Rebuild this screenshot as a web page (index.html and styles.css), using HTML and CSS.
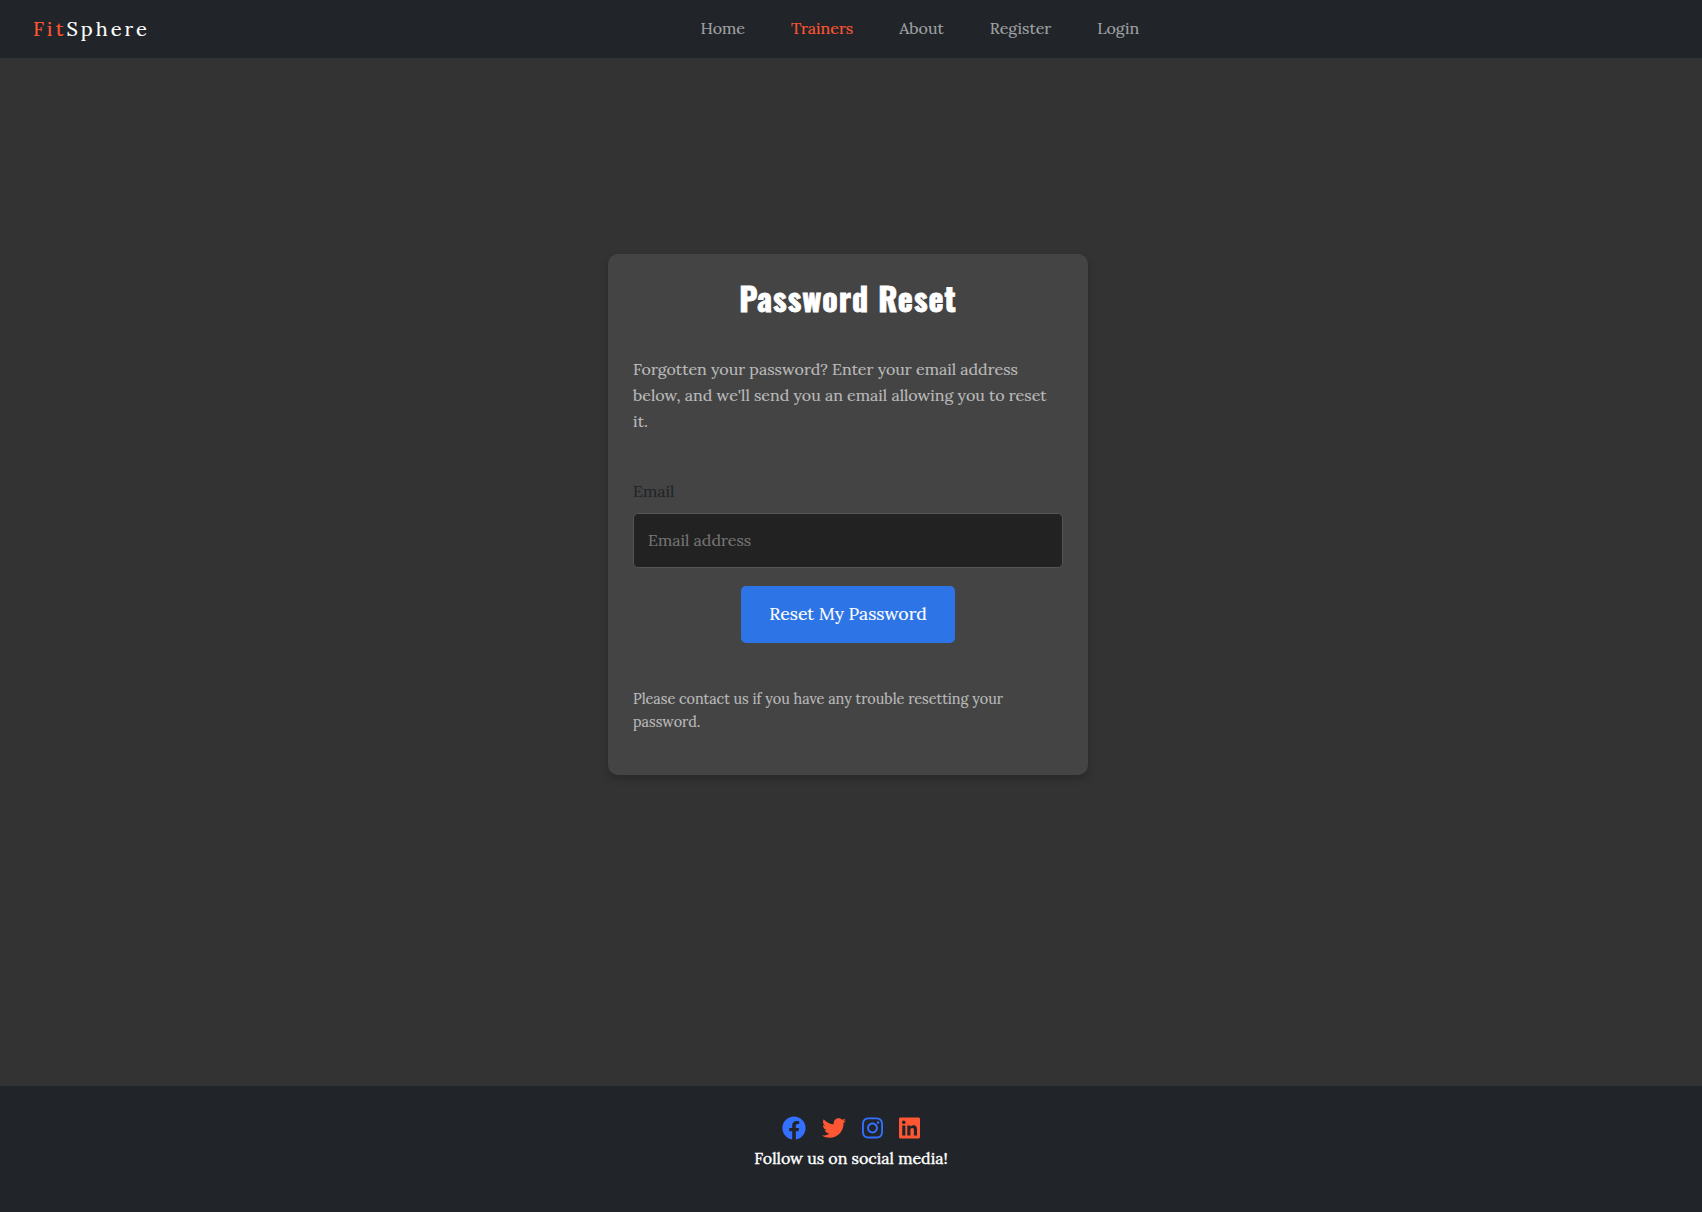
FILE: index.html
```html
<!DOCTYPE html>
<html lang="en">
<head>
<meta charset="utf-8">
<title>FitSphere - Password Reset</title>
<link rel="stylesheet" href="styles.css">
</head>
<body>
<header class="navbar">
  <a class="brand"><span class="brand-accent">Fit</span>Sphere</a>
  <nav class="links">
    <a class="link">Home</a>
    <a class="link active">Trainers</a>
    <a class="link">About</a>
    <a class="link">Register</a>
    <a class="link">Login</a>
  </nav>
</header>
<main class="main">
  <section class="card">
    <h1 class="title">Password Reset</h1>
    <p class="intro">Forgotten your password? Enter your email address below, and we'll send you an email allowing you to reset it.</p>
    <form class="form">
      <label class="label" for="email">Email</label>
      <input class="input" id="email" type="email" placeholder="Email address">
      <button class="button" type="button">Reset My Password</button>
    </form>
    <p class="help">Please contact us if you have any trouble resetting your password.</p>
  </section>
</main>
<footer class="footer">
  <div class="social">
    <svg class="icon blue" width="24" height="24" viewBox="0 0 512 512"><path d="M504 256C504 119 393 8 256 8S8 119 8 256c0 123.78 90.69 226.38 209.25 245V327.69h-63V256h63v-54.64c0-62.15 37-96.48 93.67-96.48 27.14 0 55.52 4.84 55.52 4.84v61h-31.28c-30.8 0-40.41 19.12-40.41 38.73V256h68.78l-11 71.69h-57.78V501C413.31 482.38 504 379.78 504 256z"/></svg>
    <svg class="icon orange" width="24" height="24" viewBox="0 0 512 512"><path d="M459.37 151.716c.325 4.548.325 9.097.325 13.645 0 138.72-105.583 298.558-298.558 298.558-59.452 0-114.68-17.219-161.137-47.106 8.447.974 16.568 1.299 25.34 1.299 49.055 0 94.213-16.568 130.274-44.832-46.132-.975-84.792-31.188-98.112-72.772 6.498.974 12.995 1.624 19.818 1.624 9.421 0 18.843-1.3 27.614-3.573-48.081-9.747-84.143-51.98-84.143-102.985v-1.299c13.969 7.797 30.214 12.67 47.431 13.319-28.264-18.843-46.781-51.005-46.781-87.391 0-19.492 5.197-37.36 14.294-52.954 51.655 63.675 129.3 105.258 216.365 109.807-1.624-7.797-2.599-15.918-2.599-24.04 0-57.828 46.782-104.934 104.934-104.934 30.213 0 57.502 12.67 76.67 33.137 23.715-4.548 46.456-13.32 66.599-25.34-7.798 24.366-24.366 44.833-46.132 57.827 21.117-2.273 41.584-8.122 60.426-16.243-14.292 20.791-32.161 39.308-52.628 54.253z"/></svg>
    <svg class="icon blue" width="21" height="24" viewBox="0 0 448 512"><path d="M224.1 141c-63.600 0-114.900 51.300-114.900 114.900s51.300 114.900 114.900 114.900S339 319.500 339 255.900 287.700 141 224.100 141zm0 189.600c-41.100 0-74.700-33.500-74.700-74.700s33.500-74.700 74.700-74.700 74.700 33.500 74.700 74.700-33.600 74.700-74.700 74.700zm146.400-194.300c0 14.900-12 26.800-26.800 26.800-14.900 0-26.800-12-26.800-26.800s12-26.800 26.800-26.800 26.800 12 26.800 26.800zm76.100 27.200c-1.700-35.900-9.900-67.700-36.200-93.900-26.200-26.200-58-34.400-93.900-36.200-37-2.100-147.900-2.100-184.900 0-35.800 1.700-67.600 9.900-93.900 36.100s-34.400 58-36.200 93.900c-2.100 37-2.100 147.900 0 184.900 1.700 35.900 9.900 67.700 36.200 93.900s58 34.400 93.900 36.200c37 2.100 147.900 2.100 184.900 0 35.900-1.700 67.700-9.900 93.900-36.200 26.200-26.200 34.400-58 36.200-93.900 2.100-37 2.100-147.800 0-184.800zM398.800 388c-7.800 19.600-22.900 34.700-42.600 42.600-29.500 11.700-99.500 9-132.100 9s-102.700 2.600-132.100-9c-19.600-7.800-34.700-22.900-42.600-42.600-11.700-29.500-9-99.500-9-132.100s-2.600-102.700 9-132.100c7.800-19.600 22.900-34.700 42.600-42.600 29.500-11.700 99.500-9 132.100-9s102.700-2.600 132.100 9c19.600 7.800 34.700 22.900 42.600 42.600 11.700 29.500 9 99.500 9 132.100s2.700 102.700-9 132.100z"/></svg>
    <svg class="icon orange" width="21" height="24" viewBox="0 0 448 512"><path d="M416 32H31.900C14.300 32 0 46.500 0 64.300v383.400C0 465.500 14.300 480 31.900 480H416c17.600 0 32-14.500 32-32.300V64.300c0-17.800-14.400-32.300-32-32.300zM135.400 416H69V202.200h66.500V416zm-33.200-243c-21.300 0-38.500-17.300-38.500-38.500S80.900 96 102.200 96c21.200 0 38.500 17.300 38.500 38.500 0 21.300-17.200 38.500-38.500 38.500zm282.100 243h-66.400V312c0-24.800-.5-56.700-34.500-56.700-34.600 0-39.900 27-39.900 54.900V416h-66.400V202.200h63.700v29.200h.9c8.900-16.800 30.600-34.500 62.900-34.500 67.200 0 79.700 44.300 79.700 101.900V416z"/></svg>
  </div>
  <p class="follow">Follow us on social media!</p>
</footer>
</body>
</html>
```
FILE: styles.css
```css
* { box-sizing: border-box; }
body {
  margin: 0;
  height: 1212px;
  display: flex;
  flex-direction: column;
  background: #333;
  color: #212529;
  font-family: Lora, "Liberation Serif", serif;
  font-size: 16px;
  line-height: 26px;
  -webkit-text-stroke: .15px;
  overflow: hidden;
}
.navbar {
  flex: none;
  height: 58px;
  display: flex;
  align-items: center;
  padding: 0 33px;
  background: #212529;
}
.brand { width: 667.5px; font-size: 20px; letter-spacing: 3px; color: #fff; white-space: nowrap; }
.brand-accent { color: #ff5733; }
.links { display: flex; gap: 46px; padding-bottom: 2px; color: #a0a2a4; }
.link { white-space: nowrap; }
.active { color: #ff5733; }

.main { flex: 1; padding: 196px 6px 0 0; display: flex; justify-content: center; align-items: flex-start; }
.card {
  width: 480px;
  height: 521px;
  padding: 24px 25px;
  border-radius: 10px;
  background: #444;
  box-shadow: 0 4px 8px rgba(0, 0, 0, .2);
}
.title {
  margin: 0;
  color: #fff;
  font: 700 32px/40px Oswald, "Roboto Condensed", sans-serif;
  letter-spacing: 1px;
  text-align: center;
  -webkit-text-stroke: .8px;
}
.intro { margin: 38px 0 0; color: #bbb; }
.form { margin-top: 44px; display: flex; flex-direction: column; }
.label { height: 35px; }
.input {
  height: 55px;
  padding: 0 14px 2px;
  border: 1px solid #555;
  border-radius: 5px;
  background: #222;
  color: #fff;
  font: inherit;
}
.input::placeholder { color: #757575; opacity: 1; }
.button {
  align-self: center;
  width: 214px;
  height: 57px;
  margin-top: 18px;
  padding: 0 0 1px;
  border: 0;
  border-radius: 5px;
  background: #2d74e7;
  color: #fff;
  font: inherit;
  font-size: 17.6px;
}
.help { margin: 45px 0 0; color: #bbb; font-size: 14.4px; line-height: 23px; }

.footer {
  flex: none;
  height: 126px;
  padding-top: 30px;
  display: flex;
  flex-direction: column;
  align-items: center;
  background: #212529;
  color: #fff;
}
.social { display: flex; gap: 16px; }
.icon { display: block; fill: currentColor; }
.blue { color: #3370ff; }
.orange { color: #ff5733; }
.follow { margin: 5px 0 0; -webkit-text-stroke: .4px; }
```
